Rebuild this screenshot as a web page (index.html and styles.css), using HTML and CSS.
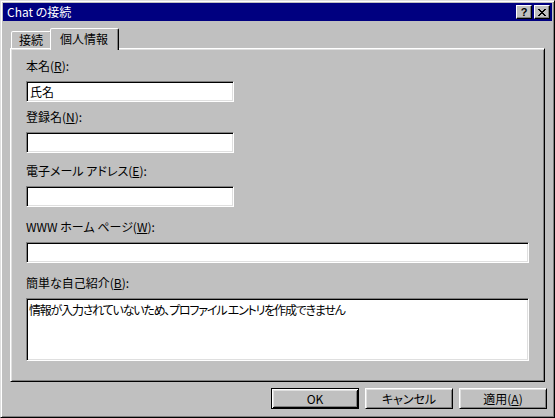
FILE: index.html
```html
<!DOCTYPE html>
<html lang="ja">
<head>
<meta charset="utf-8">
<title>Chat の接続</title>
<link rel="stylesheet" href="styles.css">
</head>
<body>
<div class="window">
  <div class="titlebar">
    <span class="title">Chat の接続</span>
    <div class="title-buttons">
      <div class="tbtn help">?</div>
      <div class="tbtn close">
        <svg width="8" height="7" viewBox="0 0 8 7" shape-rendering="crispEdges"><path fill="#000" d="M0 0h2v1h-2z M6 0h2v1h-2z M1 1h2v1h-2z M5 1h2v1h-2z M2 2h4v1h-4z M3 3h2v1h-2z M2 4h4v1h-4z M1 5h2v1h-2z M5 5h2v1h-2z M0 6h2v1h-2z M6 6h2v1h-2z"/></svg>
      </div>
    </div>
  </div>
  <div class="body">
    <div class="tabs">
      <div class="tab">接続</div>
      <div class="tab active">個人情報</div>
    </div>
    <div class="panel">
      <div class="field">
        <div class="label">本名(<u>R</u>):</div>
        <div class="input short">氏名</div>
      </div>
      <div class="field tight">
        <div class="label">登録名(<u>N</u>):</div>
        <div class="input short"></div>
      </div>
      <div class="field">
        <div class="label">電子メール アドレス(<u>E</u>):</div>
        <div class="input short"></div>
      </div>
      <div class="field loose">
        <div class="label">WWW ホーム ページ(<u>W</u>):</div>
        <div class="input"></div>
      </div>
      <div class="field loose">
        <div class="label">簡単な自己紹介(<u>B</u>):</div>
        <div class="input area">情報が入力されていないため、プロファイル エントリを作成できません</div>
      </div>
    </div>
    <div class="buttons">
      <div class="btn default">OK</div>
      <div class="btn">キャンセル</div>
      <div class="btn">適用(<u>A</u>)</div>
    </div>
  </div>
</div>
</body>
</html>
```
FILE: styles.css
```css
* { box-sizing: border-box; }

body {
  margin: 0;
  background: #c0c0c0;
  color: #000;
  font-family: "Noto Sans CJK JP", "Noto Sans", sans-serif;
  font-size: 12px;
  font-feature-settings: "palt";
}

.window {
  width: 555px;
  height: 418px;
  background: #c0c0c0;
  border: 1px solid;
  border-color: #dfdfdf #000 #000 #dfdfdf;
  box-shadow: inset 1px 1px #fff, inset -1px -1px #808080;
  padding: 2px;
  display: flex;
  flex-direction: column;
}

.titlebar {
  height: 18px;
  background: #000080;
  color: #fff;
  display: flex;
  align-items: center;
  justify-content: space-between;
  padding: 0 2px;
}

.title {
  padding-left: 2px;
  line-height: 18px;
}

.title-buttons {
  display: flex;
  gap: 2px;
}

.tbtn {
  width: 16px;
  height: 14px;
  background: #c0c0c0;
  border: 1px solid;
  border-color: #fff #000 #000 #fff;
  box-shadow: inset -1px -1px #808080;
  display: flex;
  align-items: center;
  justify-content: center;
  color: #000;
}

.help {
  font-family: "Liberation Sans", sans-serif;
  font-weight: bold;
  font-size: 11px;
  line-height: 12px;
}

.body {
  flex: 1;
  display: flex;
  flex-direction: column;
  padding: 7px 7px 6px 7px;
}

.tabs {
  display: flex;
  align-items: flex-end;
  height: 22px;
  margin-bottom: -2px;
  padding-left: 1px;
  position: relative;
  z-index: 1;
}

.tab {
  height: 17px;
  margin-bottom: 2px;
  border: 1px solid;
  border-bottom: none;
  border-color: #fff #000 transparent #fff;
  box-shadow: inset -1px 0 #808080;
  border-radius: 2px 2px 0 0;
  padding: 0 8px 0 7px;
  line-height: 16px;
  background: #c0c0c0;
}

.tab.active {
  height: 22px;
  margin-bottom: 0;
  margin-left: -2px;
  padding: 0 10px 0 9px;
  line-height: 19px;
}

.panel {
  flex: 1;
  border: 1px solid;
  border-color: #fff #000 #000 #fff;
  box-shadow: inset 1px 1px #dfdfdf, inset -1px -1px #808080;
  padding: 10px 15px;
  display: flex;
  flex-direction: column;
}

.field + .field {
  margin-top: 11px;
}

.field.tight {
  margin-top: 8px;
}

.field.loose {
  margin-top: 13px;
}

.label {
  height: 14px;
  line-height: 14px;
  margin-bottom: 8px;
}

.input {
  height: 21px;
  background: #fff;
  border: 1px solid;
  border-color: #808080 #fff #fff #808080;
  box-shadow: inset 1px 1px #000, inset -1px -1px #dfdfdf;
  padding: 2px 3px;
  line-height: 15px;
}

.input.short {
  width: 208px;
}

.input.area {
  height: 63px;
  padding: 3px 2px;
  letter-spacing: -1.2px;
}

.buttons {
  display: flex;
  justify-content: flex-end;
  gap: 6px;
  margin-top: 6px;
  margin-right: -2px;
}

.btn {
  width: 88px;
  height: 21px;
  border: 1px solid;
  border-color: #fff #000 #000 #fff;
  box-shadow: inset 1px 1px #dfdfdf, inset -1px -1px #808080;
  display: flex;
  align-items: center;
  justify-content: center;
}

.btn.default {
  border-color: #000;
  box-shadow: inset 1px 1px #fff, inset -1px -1px #000, inset 2px 2px #dfdfdf, inset -2px -2px #808080;
}
```
